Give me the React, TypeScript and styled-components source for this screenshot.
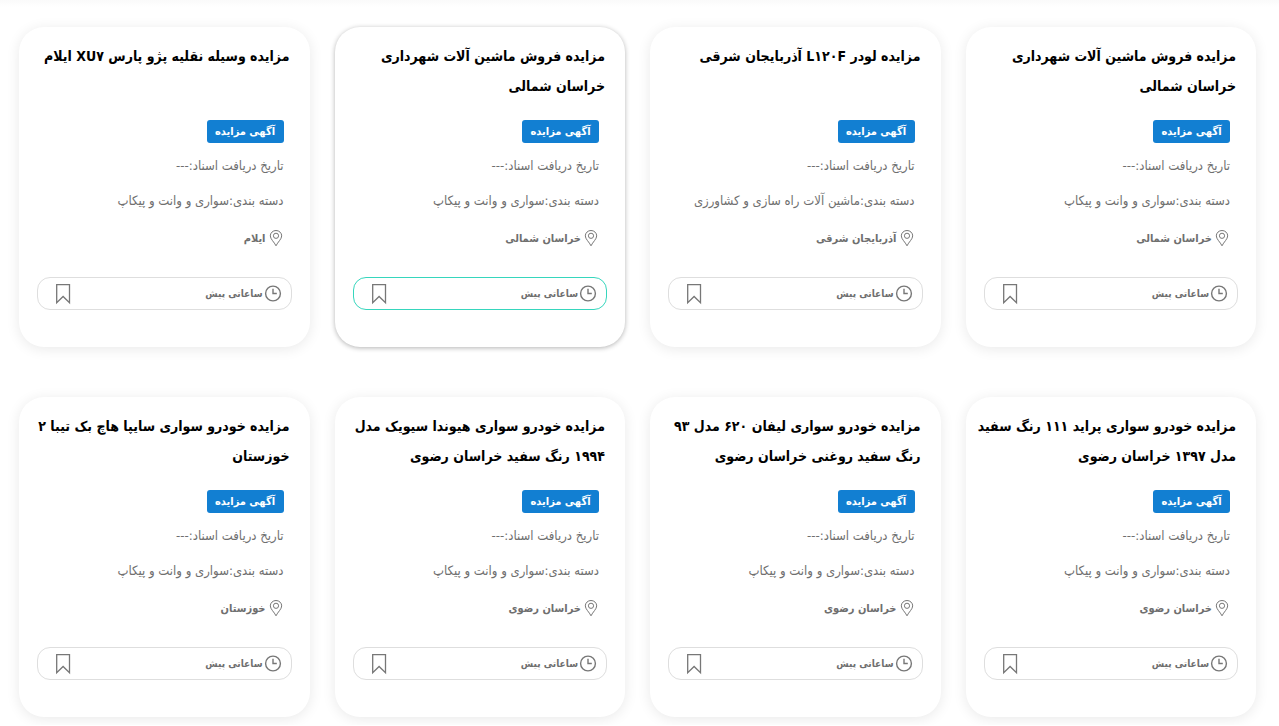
import React from "react";
import styled, { createGlobalStyle } from "styled-components";

const GlobalStyle = createGlobalStyle`
  *, *::before, *::after { box-sizing: border-box; }
  body {
    margin: 0;
    background: #fff;
    font-family: "DejaVu Sans Condensed", "DejaVu Sans", sans-serif;
    color: #6f6f6f;
  }
`;

const Page = styled.main`
  padding: 0 23px 8px 19px;
`;

const TopShade = styled.div`
  height: 7px;
  margin: 0 -23px 20px -19px;
  background: linear-gradient(#fafafa, #fff);
`;

const Grid = styled.div`
  display: grid;
  grid-template-columns: repeat(4, minmax(0, 1fr));
  gap: 50px 25px;
`;

const Card = styled.article<{ $active?: boolean }>`
  display: flex;
  flex-direction: column;
  align-items: flex-start;
  min-height: 320px;
  padding: 14px 18px 37px;
  border-radius: 25px;
  background: #fff;
  box-shadow: ${(p) =>
    p.$active ? "0 1px 5px rgba(0, 0, 0, 0.3)" : "0 2px 14px rgba(0, 0, 0, 0.09)"};
`;

const Title = styled.h2`
  margin: 0 2px 19px -18px;
  min-height: 60px;
  font-size: 14px;
  line-height: 30px;
  font-weight: 700;
`;

const TitleLink = styled.a`
  color: #000;
  text-decoration: none;
`;

const Line = styled.span`
  display: block;
  white-space: nowrap;
`;

const Details = styled.div`
  display: flex;
  flex-direction: column;
  align-items: flex-start;
  padding: 0 8px;
`;

const Badge = styled.span`
  display: flex;
  align-items: center;
  justify-content: center;
  width: 77px;
  height: 23px;
  border-radius: 3px;
  background: #127fd2;
  color: #fff;
  font-size: 11px;
  line-height: 23px;
  font-weight: 700;
  white-space: nowrap;
`;

const Info = styled.p`
  margin: 11px 0 0;
  font-size: 13px;
  line-height: 24px;
  white-space: nowrap;
`;

const Place = styled.p`
  display: flex;
  align-items: center;
  gap: 2px;
  margin: 14px 0 0;
  font-size: 11px;
  line-height: 24px;
  font-weight: 700;
`;

const Footer = styled.footer<{ $active?: boolean }>`
  display: flex;
  align-items: center;
  justify-content: space-between;
  align-self: stretch;
  height: 33px;
  margin-top: auto;
  padding: 0 9px 0 17px;
  border: 1px solid ${(p) => (p.$active ? "#36d6bd" : "#dedede")};
  border-radius: 13px;
`;

const Time = styled.span`
  display: flex;
  align-items: center;
  gap: 1px;
  font-size: 10px;
  line-height: 20px;
  font-weight: 700;
`;

const SaveButton = styled.button`
  display: flex;
  padding: 0;
  border: 0;
  background: none;
  color: #777;
  cursor: pointer;
`;

const PinIcon = () => (
  <svg width="16" height="18" viewBox="0 0 16 18" fill="none" stroke="#777" aria-hidden="true">
    <path d="M8 15.8C6.3 12.2 2.3 9 2.3 5.9a5.7 5.4 0 0 1 11.4 0C13.7 9 9.7 12.2 8 15.8Z" />
    <circle cx="8" cy="5.8" r="2.6" />
  </svg>
);

const ClockIcon = () => (
  <svg width="18" height="18" viewBox="0 0 18 18" fill="none" stroke="#777" strokeWidth="1.4" aria-hidden="true">
    <circle cx="9" cy="8.5" r="7.4" />
    <path d="M9 3.8V8.500H12.800" />
  </svg>
);

const BookmarkIcon = () => (
  <svg width="18" height="22" viewBox="0 0 18 22" fill="none" stroke="currentColor" strokeWidth="1.3" aria-hidden="true">
    <path d="M1.700 1.600H14.500V19.700L8.100 13.500L1.700 19.700Z" />
  </svg>
);

interface Auction {
  title: string[];
  category: string;
  place: string;
  active?: boolean;
}

const CARS = "سواری و وانت و پیکاپ";

const auctions: Auction[] = [
  { title: ["مزایده فروش ماشین آلات شهرداری", "خراسان شمالی"], category: CARS, place: "خراسان شمالی" },
  { title: ["مزایده لودر L۱۲۰F آذربایجان شرقی"], category: "ماشین آلات راه سازی و کشاورزی", place: "آذربایجان شرقی" },
  { title: ["مزایده فروش ماشین آلات شهرداری", "خراسان شمالی"], category: CARS, place: "خراسان شمالی", active: true },
  { title: ["مزایده وسیله نقلیه پژو پارس XU۷ ایلام"], category: CARS, place: "ایلام" },
  { title: ["مزایده خودرو سواری پراید ۱۱۱ رنگ سفید", "مدل ۱۳۹۷ خراسان رضوی"], category: CARS, place: "خراسان رضوی" },
  { title: ["مزایده خودرو سواری لیفان ۶۲۰ مدل ۹۳", "رنگ سفید روغنی خراسان رضوی"], category: CARS, place: "خراسان رضوی" },
  { title: ["مزایده خودرو سواری هیوندا سیویک مدل", "۱۹۹۴ رنگ سفید خراسان رضوی"], category: CARS, place: "خراسان رضوی" },
  { title: ["مزایده خودرو سواری سایپا هاچ بک تیبا ۲", "خوزستان"], category: CARS, place: "خوزستان" },
];

const AuctionCard = ({ title, category, place, active }: Auction) => (
  <Card $active={active}>
    <Title>
      <TitleLink href="#">
        {title.map((line) => (
          <Line key={line}>{line}</Line>
        ))}
      </TitleLink>
    </Title>
    <Details>
      <Badge>آگهی مزایده</Badge>
      <Info>تاریخ دریافت اسناد:---</Info>
      <Info>دسته بندی:{category}</Info>
      <Place>
        <PinIcon />
        {place}
      </Place>
    </Details>
    <Footer $active={active}>
      <Time>
        <ClockIcon />
        ساعاتی پیش
      </Time>
      <SaveButton type="button" aria-label="نشان کردن">
        <BookmarkIcon />
      </SaveButton>
    </Footer>
  </Card>
);

export default function App() {
  return (
    <Page dir="rtl" lang="fa">
      <GlobalStyle />
      <TopShade />
      <Grid>
        {auctions.map((auction, index) => (
          <AuctionCard key={index} {...auction} />
        ))}
      </Grid>
    </Page>
  );
}
